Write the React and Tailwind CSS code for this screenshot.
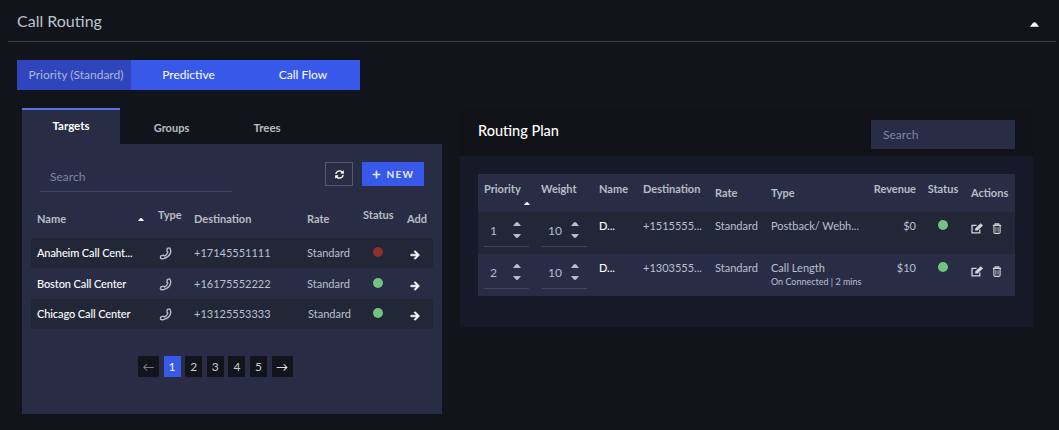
import React from "react";
import { FaArrowRight, FaPlus, FaSyncAlt } from "react-icons/fa";

const Caret = ({ className = "" }) => (
  <svg viewBox="0 0 8 4" className={"w-2 h-1 " + className}><path d="M0 4 L2.6 0.7 Q4 -0.5 5.4 0.7 L8 4 Z" fill="currentColor" /></svg>
);

const PhoneIcon = () => (
  <svg viewBox="0 0 14 14" className="h-[13px] w-[13px]" fill="none" stroke="currentColor" strokeWidth="1.5" strokeLinejoin="round">
    <path d="M9 1.5 L11.5 1 Q13 3 12.5 6 Q11 11 5 12.5 Q2 13 1.5 11.5 L2 9.5 L5 8.8 L6 9.8 Q8.5 8.5 9.5 5.5 L8.5 4.5 Z" />
  </svg>
);

const EditIcon = () => (
  <svg viewBox="0 0 14 12" className="h-[11px] w-[13px]" fill="none" stroke="currentColor" strokeWidth="1.4">
    <path d="M9.5 7 V10.8 H1 V2.6 H6" />
    <path d="M4.5 8 L5 5.6 L10.5 0.6 L12.8 2.8 L7 8 Z" fill="currentColor" strokeWidth="0.5" />
  </svg>
);

const TrashIcon = () => (
  <svg viewBox="0 0 10 12" className="h-[11px] w-[10px]" fill="none" stroke="currentColor" strokeWidth="1.2">
    <path d="M0.5 2.6 H9.5 M3 2.4 V1 H7 V2.4 M1.6 2.6 V10 Q1.6 11.3 3 11.3 H7 Q8.4 11.3 8.4 10 V2.6" />
    <path d="M3.8 4.5 V9.5 M6.2 4.5 V9.5" strokeWidth="0.9" />
  </svg>
);

const leftRows = [
  ["Anaheim Call Cent...", "+17145551111", "Standard", "bg-[#8f2f2f]", "h-[30px] bg-[#222738]", ""],
  ["Boston Call Center", "+16175552222", "Standard", "bg-[#6fc47f]", "h-[31px] pt-px", ""],
  ["Chicago Call Center", "+13125553333", "Standard", "bg-[#6fc47f]", "h-[30px] bg-[#222738]", "ml-px"],
];

const Spin = ({ v }) => (
  <div className="relative h-[35px] w-[45px] border-b border-[#3f4560]">
    <div className="flex h-full items-center pl-1.5 pt-1 text-[12px] text-[#b4bccf]">{v}</div>
    <div className="absolute right-[8px] top-[10px] flex flex-col gap-[8px] text-[#b8bcc8]">
      <Caret />
      <Caret className="rotate-180" />
    </div>
  </div>
);

const planCols = "grid grid-cols-[57px_58px_44px_72px_56px_101px_50px_49px_50px]";
const targetCols = "grid grid-cols-[127px_36px_113px_56px_44px_26px]";

export default function App() {
  return (
    <div className="h-[430px] w-[1059px] overflow-hidden bg-[#12141b] font-['Lato',sans-serif]">
      <div className="ml-2 mr-[3px] flex h-[42px] items-center justify-between border-b border-[#3c3e44] pl-[9px] pr-[17px]">
        <h1 className="text-base font-normal text-[#bcc4cc]">Call Routing</h1>
        <Caret className="mt-[7px] h-[5px] w-[9px] text-white" />
      </div>

      <div className="ml-[17px] mt-[18px] flex h-[30px] w-[343px] text-[12px] text-white">
        <button className="w-[114px] bg-[#2e45bc] pl-1 text-[#aeb7d8]">Priority (Standard)</button>
        <button className="w-[114px] bg-[#3858e9] pl-px">Predictive</button>
        <button className="w-[115px] bg-[#3858e9] pl-px">Call Flow</button>
      </div>

      <div className="mt-[18px] flex items-start">
        <div className="ml-[22px] w-[420px]">
          <div className="flex h-9 font-bold">
            <div className="flex w-[98px] items-center justify-center border-t-2 border-[#5a72e6] bg-[#282d45] pb-0.5 text-[11.5px] text-white">Targets</div>
            <div className="flex w-[103px] items-center justify-center pt-1 text-[11px] text-[#b7bdc6]">Groups</div>
            <div className="flex w-[88px] items-center justify-center pt-1 text-[11.5px] text-[#b7bdc6]">Trees</div>
          </div>
          <div className="h-[270px] bg-[#282d45] px-[9px]">
            <div className="flex items-start pt-[18px]">
              <div className="ml-[9px] mt-px flex h-[29px] w-[192px] items-center border-b border-[#3f4560] pl-2.5 text-[12px] text-[#7e86a3]">Search</div>
              <button className="ml-[93px] flex h-6 w-7 items-center justify-center border border-[#555a6a] text-[9px] text-white"><FaSyncAlt /></button>
              <button className="ml-[9px] flex h-6 w-[62px] items-center justify-center gap-1.5 bg-[#3858e9] text-[10px] font-bold tracking-[1.3px] text-[#e6e9f5]"><FaPlus className="text-[9px]" />NEW</button>
            </div>

            <div className={targetCols + " mt-[8px] h-[38px] text-[11px] font-bold leading-4 text-[#b7bdc6]"}>
              <div className="flex items-center justify-between pl-1.5 pr-[13px]"><span>Name</span><Caret className="h-[3px] w-1.5 text-white" /></div>
              <div className="pt-[7px]">Type</div>
              <div className="flex items-center">Destination</div>
              <div className="flex items-center">Rate</div>
              <div className="pt-[7px]">Status</div>
              <div className="flex items-center">Add</div>
            </div>

            {leftRows.map((r) => (
              <div key={r[0]} className={targetCols + " items-center text-[11px] " + r[4]}>
                <div className="pl-1.5 font-medium tracking-[-0.1px] text-white">{r[0]}</div>
                <div className="pl-px text-[#b8bdc8]"><PhoneIcon /></div>
                <div className="text-[#b9c0cf]">{r[1]}</div>
                <div className={"text-[#b9c0cf] " + r[5]}>{r[2]}</div>
                <div className="pb-0.5 pl-[10px]"><div className={"size-2.5 rounded-full " + r[3]} /></div>
                <div className="pl-[3px] pt-1 text-[10px] text-white"><FaArrowRight className="stroke-current stroke-[30]" /></div>
              </div>
            ))}

            <div className="ml-[107px] mt-[27px] flex gap-[4.6px] text-[12px] text-[#c8ccd6]">
              <div className="flex h-[21px] w-[21px] items-center justify-center bg-[#12141b] text-[#8b8f99]">←</div>
              <div className="flex h-[21px] w-[17px] items-center justify-center bg-[#3858e9] text-white">1</div>
              {[2, 3, 4, 5].map((n) => (
                <div key={n} className="flex h-[21px] w-[17px] items-center justify-center bg-[#12141b]">{n}</div>
              ))}
              <div className="flex h-[21px] w-[21px] items-center justify-center bg-[#12141b] text-white">→</div>
            </div>
          </div>
        </div>

        <div className="ml-[18px] mt-[2px] w-[573px]">
          <div className="flex h-[46px] items-start justify-between bg-[#101217] pl-[18px] pr-[18px]">
            <div className="mt-[11px] text-[14.5px] font-medium leading-5 text-white">Routing Plan</div>
            <div className="mt-[10px] flex h-[29px] w-[144px] items-center bg-[#282d45] pl-3 text-[12px] text-[#7e86a3]">Search</div>
          </div>
          <div className="h-[171px] bg-[#161927] px-[18px] pt-[18px]">
            <div className={planCols + " h-[38px] bg-[#282d45] text-[11px] font-bold leading-4 text-[#b7bdc6]"}>
              <div className="relative pl-1.5 pt-[7px]">Priority<Caret className="absolute bottom-[7px] left-[45px] h-[3px] w-1.5 text-white" /></div>
              <div className="pl-1.5 pt-[7px]">Weight</div>
              <div className="pl-1.5 pt-[7px]">Name</div>
              <div className="pl-1.5 pt-[7px]">Destination</div>
              <div className="flex items-center pl-1.5">Rate</div>
              <div className="flex items-center pl-1.5">Type</div>
              <div className="pt-[7px] text-right">Revenue</div>
              <div className="pl-[5px] pt-[7px] text-center">Status</div>
              <div className="flex items-center pl-1.5">Actions</div>
            </div>
            {[
              ["1", "D...", "+1515555...", "Postback/ Webh...", null, "$0", "bg-[#222738]", "pt-[11px]"],
              ["2", "D...", "+1303555...", "Call Length", "On Connected | 2 mins", "$10", "bg-[#282d45]", "pt-[12px]"],
            ].map((r) => (
              <div key={r[0]} className={planCols + " h-[42px] text-[11px] leading-4 text-[#b9c0cf] " + r[6]}>
                <div className="pl-1.5"><Spin v={r[0]} /></div>
                <div className="pl-[7px]"><Spin v="10" /></div>
                <div className="pl-1.5 pt-[6px] font-medium text-white">{r[1]}</div>
                <div className="pl-1.5 pt-[6px]">{r[2]}</div>
                <div className="pl-1.5 pt-[6px]">Standard</div>
                <div className="pl-1.5 pt-[6px]">
                  <div className="whitespace-nowrap">{r[3]}</div>
                  {r[4] && <div className="whitespace-nowrap text-[9px] leading-3">{r[4]}</div>}
                </div>
                <div className="pt-[6px] text-right">{r[5]}</div>
                <div className="flex justify-center pl-[5px] pt-[8px]"><div className="size-2.5 rounded-full bg-[#6fc47f]" /></div>
                <div className={"flex gap-2 pl-1.5 text-[#d4d6dc] " + r[7]}><EditIcon /><TrashIcon /></div>
              </div>
            ))}
          </div>
        </div>
      </div>
    </div>
  );
}
